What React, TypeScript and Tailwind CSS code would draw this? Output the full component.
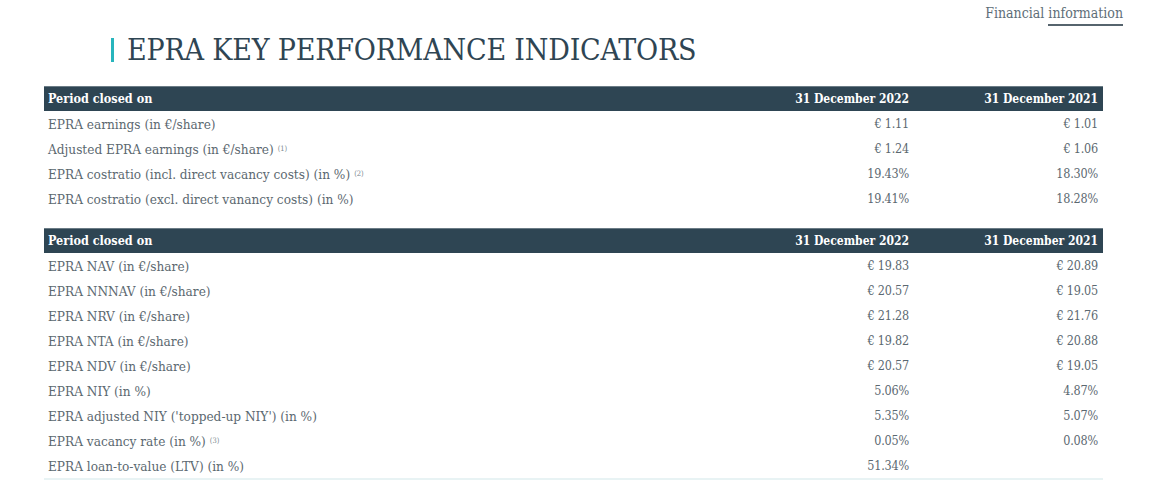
import React from 'react';

type Row = { label: string; note?: string; y2022: string; y2021: string };

const earnings: Row[] = [
  { label: 'EPRA earnings (in €/share)', y2022: '€ 1.11', y2021: '€ 1.01' },
  { label: 'Adjusted EPRA earnings (in €/share)', note: '(1)', y2022: '€ 1.24', y2021: '€ 1.06' },
  { label: 'EPRA costratio (incl. direct vacancy costs) (in %)', note: '(2)', y2022: '19.43%', y2021: '18.30%' },
  { label: 'EPRA costratio (excl. direct vanancy costs) (in %)', y2022: '19.41%', y2021: '18.28%' },
];

const valuation: Row[] = [
  { label: 'EPRA NAV (in €/share)', y2022: '€ 19.83', y2021: '€ 20.89' },
  { label: 'EPRA NNNAV (in €/share)', y2022: '€ 20.57', y2021: '€ 19.05' },
  { label: 'EPRA NRV (in €/share)', y2022: '€ 21.28', y2021: '€ 21.76' },
  { label: 'EPRA NTA (in €/share)', y2022: '€ 19.82', y2021: '€ 20.88' },
  { label: 'EPRA NDV (in €/share)', y2022: '€ 20.57', y2021: '€ 19.05' },
  { label: 'EPRA NIY (in %)', y2022: '5.06%', y2021: '4.87%' },
  { label: "EPRA adjusted NIY ('topped-up NIY') (in %)", y2022: '5.35%', y2021: '5.07%' },
  { label: 'EPRA vacancy rate (in %)', note: '(3)', y2022: '0.05%', y2021: '0.08%' },
  { label: 'EPRA loan-to-value (LTV) (in %)', y2022: '51.34%', y2021: '' },
];

const slab = { fontFamily: '"DejaVu Serif Condensed", "DejaVu Serif", serif' };

function KpiTable({ rows, last = false }: { rows: Row[]; last?: boolean }) {
  return (
    <div className={last ? 'border-b-2 border-[#e8f3f4]' : ''}>
      <div className="grid grid-cols-[1fr_190px_189px] h-[25px] items-center bg-[#2e4553] border-t border-[#6b7c86] text-white font-bold">
        <div className="pl-1 text-[12.5px]">Period closed on</div>
        <div className="text-right pr-[5px] text-[12px]">31 December 2022</div>
        <div className="text-right pr-[5px] text-[12px]">31 December 2021</div>
      </div>
      {rows.map((r) => (
        <div
          key={r.label}
          className="grid grid-cols-[1fr_190px_189px] h-[25px] pt-[2px] items-center text-[#5b6870]"
        >
          <div className="pl-1 text-[13.5px]">
            {r.label}
            {r.note && <sup className="ml-1 text-[7.5px] text-[#7d8a91]">{r.note}</sup>}
          </div>
          <div className="text-right pr-[5px] text-[12.5px] tracking-[-0.2px]">{r.y2022}</div>
          <div className="text-right pr-[5px] text-[12.5px] tracking-[-0.2px]">{r.y2021}</div>
        </div>
      ))}
    </div>
  );
}

export default function App() {
  return (
    <div className="w-[1149px] h-[487px] bg-white overflow-hidden" style={slab}>
      <div className="flex justify-end pr-[26px] pt-[3px]">
        <div className="text-[14px] text-[#5e6e78] leading-[20px]">
          Financial{' '}
          <span className="border-b-2 border-[#56646d] pb-[3px]">information</span>
        </div>
      </div>
      <div className="flex items-center h-[44px] pl-[111px] mt-[5px]">
        <span className="w-[3px] h-[24px] bg-[#28b5bd] mr-[13px]" />
        <h1 className="text-[30px] text-[#2f4553] tracking-[-0.2px] font-light leading-none">
          EPRA KEY PERFORMANCE INDICATORS
        </h1>
      </div>
      <div className="ml-[44px] w-[1059px] mt-[14px]">
        <KpiTable rows={earnings} />
        <div className="h-[17px]" />
        <KpiTable rows={valuation} last />
      </div>
    </div>
  );
}
